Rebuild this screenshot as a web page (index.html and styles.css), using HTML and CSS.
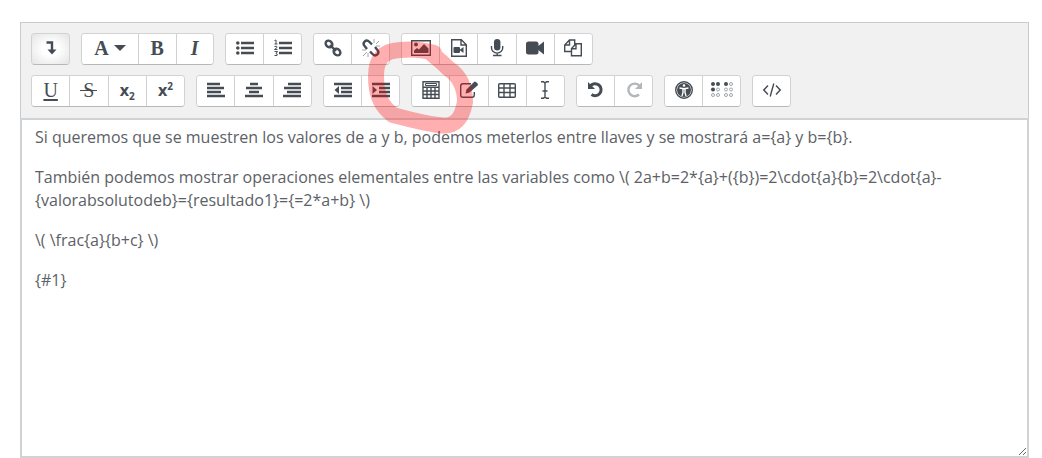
FILE: index.html
```html
<!DOCTYPE html>
<html lang="es">
<head>
<meta charset="utf-8">
<title>Editor</title>
<link rel="stylesheet" href="styles.css">
</head>
<body>
<main class="editor">
  <div class="toolbar" role="toolbar" aria-label="Editor">
    <div class="row">
      <div class="group g1">
        <button class="active" aria-label="Mostrar más botones"><svg class="icon" viewBox="0 0 18 18"><path class="line heavy" d="M4.500 3.500H10V12"/><path d="M5.500 10.500h9L10 15.500z"/></svg></button>
      </div>
      <div class="group gstyle">
        <button class="wide serif" aria-label="Estilos de párrafo">A<svg class="caret" viewBox="0 0 12 6"><path d="M0 0h12L6 6z"/></svg></button>
        <button class="serif" aria-label="Negrita">B</button>
        <button class="serif italic" aria-label="Cursiva">I</button>
      </div>
      <div class="group g2">
        <button aria-label="Lista"><svg class="icon" viewBox="0 0 18 18"><path class="line heavy" d="M5 4h13M5 9h13M5 14h13"/><circle cx="1.800" cy="4" r="1.800"/><circle cx="1.800" cy="9" r="1.800"/><circle cx="1.800" cy="14" r="1.800"/></svg></button>
        <button aria-label="Lista numerada"><svg class="icon" viewBox="0 0 18 18"><path class="line heavy" d="M5 4h13M5 9h13M5 14h13"/><path class="line fine" d="M.500 1.500L2 1v4M.500 5h3M.500 7.500Q3.500 6.500 3 8.500L.500 10.500h3M.500 12.500h3L2 14.500q2 0 1 2l-2.500 0"/></svg></button>
      </div>
      <div class="group g2">
        <button aria-label="Enlace"><svg class="icon" viewBox="0 0 18 18"><g class="line heavy"><ellipse cx="5" cy="5" rx="3" ry="3.700" transform="rotate(-45 5 5)"/><ellipse cx="13" cy="13" rx="3" ry="3.700" transform="rotate(-45 13 13)"/><path d="M6 6l6 6"/></g></svg></button>
        <button aria-label="Quitar enlace"><svg class="icon" viewBox="0 0 18 18"><path class="line heavy" d="M5 10L3 7.500C-.500 4 4-.500 7.500 3L10 5.500M13 8l2 2.500C18.500 14 14 18.500 10.500 15L8 12.500"/><path class="line faint" d="M12 0v4M14 5l3-3M14 7h4M0 11h4M1 17l4-4M6 14v4"/></svg></button>
      </div>
      <div class="group g5">
        <button aria-label="Imagen"><svg class="icon wideicon" viewBox="0 0 20 18"><path class="line" d="M.700 1.700h18.600v14.600H.700z"/><circle cx="5" cy="5.500" r="1.900"/><path d="M3 14v-2.500L6 9l2 1.500L13 5l4.500 4.500V14z"/></svg></button>
        <button aria-label="Multimedia"><svg class="icon" viewBox="0 0 18 18"><path class="line" d="M1.700.700h9.600l5 5v11.600H1.700zM11 .700V6h5"/><rect x="3.500" y="8" width="6.500" height="6" rx="1"/><path d="M9.500 11l4-3v6z"/></svg></button>
        <button aria-label="Grabar audio"><svg class="icon" viewBox="0 0 18 18"><rect x="6" y="0" width="6.400" height="11.500" rx="3.200"/><path class="line" d="M3.500 7v2a5.500 5 0 0 0 11.200 0V7M9.200 14v3M5 16.500h8.500"/></svg></button>
        <button aria-label="Grabar vídeo"><svg class="icon" viewBox="0 0 18 18"><rect x="0" y="2.500" width="12.500" height="13" rx="2.500"/><path d="M11 8l7-5.500v13L11 10z"/></svg></button>
        <button aria-label="Gestionar archivos"><svg class="icon" viewBox="0 0 18 18"><path class="line" d="M7 12.500H.700V6L5.500 1H10.700v4.500M5.500 1v5H.700M7.500 16.700V9.500L12 4.700h5.300v12zM12 4.700v5H7.500"/></svg></button>
      </div>
    </div>
    <div class="row">
      <div class="group g4">
        <button class="serif under" aria-label="Subrayado">U</button>
        <button class="serif thin" aria-label="Tachado"><span class="strike">S</span></button>
        <button class="script" aria-label="Subíndice"><span>x<sub>2</sub></span></button>
        <button class="script" aria-label="Superíndice"><span>x<sup>2</sup></span></button>
      </div>
      <div class="group g3">
        <button aria-label="Alinear a la izquierda"><svg class="icon" viewBox="0 0 18 18"><path class="line heavy" d="M0 3h13M0 7h17M0 11h14M0 15h18"/></svg></button>
        <button aria-label="Centrar"><svg class="icon" viewBox="0 0 18 18"><path class="line heavy" d="M5 3h8M1 7h16M4 11h10M0 15h18"/></svg></button>
        <button aria-label="Alinear a la derecha"><svg class="icon" viewBox="0 0 18 18"><path class="line heavy" d="M5 3h13M1 7h17M4 11h14M0 15h18"/></svg></button>
      </div>
      <div class="group g2">
        <button aria-label="Reducir sangría"><svg class="icon" viewBox="0 0 18 18"><path class="line heavy" d="M0 3h18M7 7h11M7 11h11M0 15h18"/><path d="M5 5v8L.500 9z"/></svg></button>
        <button aria-label="Aumentar sangría"><svg class="icon" viewBox="0 0 18 18"><path class="line heavy" d="M0 3h18M7 7h11M7 11h11M0 15h18"/><path d="M.500 5v8L5 9z"/></svg></button>
      </div>
      <div class="group g4">
        <button aria-label="Ecuación"><svg class="icon" viewBox="0 0 18 18"><path class="line" d="M1 .700h16v16.600H1z"/><path class="line" d="M1 6.300h16M1 10h16M1 13.500h16M5 6v11M9 6v11M13 6v11"/><path class="line fine" d="M3.500 2.500h11v2h-11z"/></svg></button>
        <button aria-label="Insertar pregunta"><svg class="icon" viewBox="0 0 18 18"><path class="line" d="M11 2.700H3Q.700 2.700.700 5v9q0 2.300 2.300 2.300h9q2.300 0 2.300-2.300v-3"/><path d="M5.500 12.500l1-4L14 1q1-.8 2 0l1.500 1.500q.8 1 0 2L9.500 11.500z"/></svg></button>
        <button aria-label="Tabla"><svg class="icon" viewBox="0 0 18 18"><rect class="line" x=".700" y="2.700" width="16.600" height="13.600" rx="1"/><path class="line" d="M1 7h16M1 11.500h16M6 3v13M12 3v13"/></svg></button>
        <button aria-label="Insertar carácter"><svg class="icon" viewBox="0 0 18 18"><path class="line" d="M5 .700h2.500L9 2l1.500-1.300H13M9 2v14M5 17.300h2.500L9 16l1.500 1.300H13M6.500 10h5"/></svg></button>
      </div>
      <div class="group g2">
        <button aria-label="Deshacer"><svg class="icon" viewBox="0 0 18 18"><path class="line thick" d="M3.500 4.800A6 6 0 1 1 4.500 13.500"/><path d="M1 1v7h7z"/></svg></button>
        <button class="disabled" aria-label="Rehacer" disabled><svg class="icon" viewBox="0 0 18 18"><path class="line heavy" d="M14.500 4.800A6.300 6.300 0 1 0 14 13.500"/><path d="M17 1v7h-7z"/></svg></button>
      </div>
      <div class="group g2">
        <button aria-label="Comprobar accesibilidad"><svg class="icon" viewBox="0 0 18 18"><circle cx="9" cy="9" r="7"/><circle class="line" cx="9" cy="9" r="8.300"/><circle class="light" cx="9" cy="4.500" r="1.300"/><path class="cut" d="M4.500 7l4.500.7 4.500-.7M8 8v3.500l-1 3.500M10 8v3.500l1 3.500"/></svg></button>
        <button aria-label="Ayuda de lector de pantalla"><svg class="braille" viewBox="0 0 24 18"><circle cx="3" cy="3" r="2"/><circle cx="8" cy="3" r="2"/><circle cx="3" cy="8.500" r="2"/><circle cx="16" cy="3" r="2"/><g class="line faint"><circle cx="8" cy="8.500" r="1.500"/><circle cx="3" cy="14" r="1.500"/><circle cx="8" cy="14" r="1.500"/><circle cx="21" cy="3" r="1.500"/><circle cx="16" cy="8.500" r="1.500"/><circle cx="21" cy="8.500" r="1.500"/><circle cx="16" cy="14" r="1.500"/><circle cx="21" cy="14" r="1.500"/></g></svg></button>
      </div>
      <div class="group g1">
        <button aria-label="HTML"><svg class="icon" viewBox="0 0 18 18"><path class="line" d="M5 4.500L.800 9 5 13.500M13 4.500L17.200 9 13 13.500M10.800 2.500l-3.600 13"/></svg></button>
      </div>
    </div>
  </div>
  <div class="content" contenteditable="true" role="textbox" aria-multiline="true" aria-label="Texto" spellcheck="false">
    <p>Si queremos que se muestren los valores de a y b, podemos meterlos entre llaves y se mostrará a={a} y b={b}.</p>
    <p>También podemos mostrar operaciones elementales entre las variables como \( 2a+b=2*{a}+({b})=2\cdot{a}{b}=2\cdot{a}-{valorabsolutodeb}={resultado1}={=2*a+b} \)</p>
    <p>\( \frac{a}{b+c} \)</p>
    <p>{#1}</p>
  </div>
  <svg class="marker" viewBox="0 0 110 100" aria-hidden="true"><path d="M68 13C58 10 45 9 34 10C18 11 10 18 10 36C10 55 15 66 27 75C42 79 56 83 72 85C90 88 96 78 99 62C99 48 95 37 83 29C77 23 71 18 66 14"/></svg>
</main>
</body>
</html>
```
FILE: styles.css
```css
* { box-sizing: border-box; }

body {
  margin: 0;
  padding: 22px 13px 0 20px;
  background: #fff;
  color: #5c6166;
  font: 16px/23px "Open Sans", "Noto Sans", sans-serif;
}

.editor {
  position: relative;
  display: flex;
  flex-direction: column;
  min-height: calc(100vh - 22px);
}

.toolbar {
  display: flex;
  flex-direction: column;
  gap: 10px;
  padding: 10px 10px 11px;
  background: #f1f1f1;
  border: 1px solid #c8cacc;
  border-bottom: 0;
}

.row { display: flex; flex-wrap: wrap; gap: 11px; }

.group {
  display: flex;
  height: 32px;
  background: #fff;
  border: 1px solid #d2d2d2;
  border-bottom-color: #b8b8b8;
  border-radius: 4px;
  overflow: hidden;
}
.g1 { width: 39px; }
.g2 { width: 77px; }
.g3 { width: 116px; }
.g4 { width: 154px; }
.g5 { width: 192px; }
.gstyle { width: 133px; }

button {
  display: flex;
  flex: 1;
  align-items: center;
  justify-content: center;
  min-width: 0;
  padding: 0 0 2px;
  background: #fff;
  border: 0;
  color: #454c54;
}
button + button { border-left: 1px solid #d2d2d2; }
.wide { flex: 0 0 56px; gap: 5px; }
.active { background: radial-gradient(#fff 30%, #e4e4e4); }
.disabled { color: #b4b7ba; }

.serif { font: bold 20px/24px "Liberation Serif", serif; }
.italic { font-style: italic; }
.under { font-weight: normal; text-decoration: underline; text-underline-offset: 2px; }
.thin { font-weight: normal; }
.strike {
  padding: 0 3px;
  background: linear-gradient(currentColor, currentColor) center / 100% 1px no-repeat;
}
.script { font: bold 16px/20px "Open Sans", sans-serif; }
.script sub, .script sup { font-size: 10px; line-height: 0; }

svg { display: block; fill: currentColor; }
.icon { width: 18px; height: 18px; }
.wideicon { width: 20px; }
.caret { width: 12px; height: 6px; }
.braille { width: 24px; height: 18px; }
.line { fill: none; stroke: currentColor; stroke-width: 1.4; }
.heavy { stroke-width: 2.4; }
.thick { stroke-width: 3; }
.fine { stroke-width: 1; }
.faint { stroke-width: 1; opacity: 0.5; }
.light { fill: #fff; }
.cut { fill: none; stroke: #fff; stroke-width: 1.4; }

.content {
  flex: 1;
  padding: 6px 13px 0;
  border: 2px solid #cfd3d6;
  overflow: auto;
  resize: vertical;
  outline: none;
}
.content p { margin: 0 0 17px; }

.marker {
  position: absolute;
  left: 346px;
  top: 18px;
  width: 110px;
  height: 100px;
  fill: none;
  stroke: #f00;
  stroke-width: 16;
  stroke-linecap: round;
  stroke-linejoin: round;
  opacity: 0.31;
  pointer-events: none;
}
```
